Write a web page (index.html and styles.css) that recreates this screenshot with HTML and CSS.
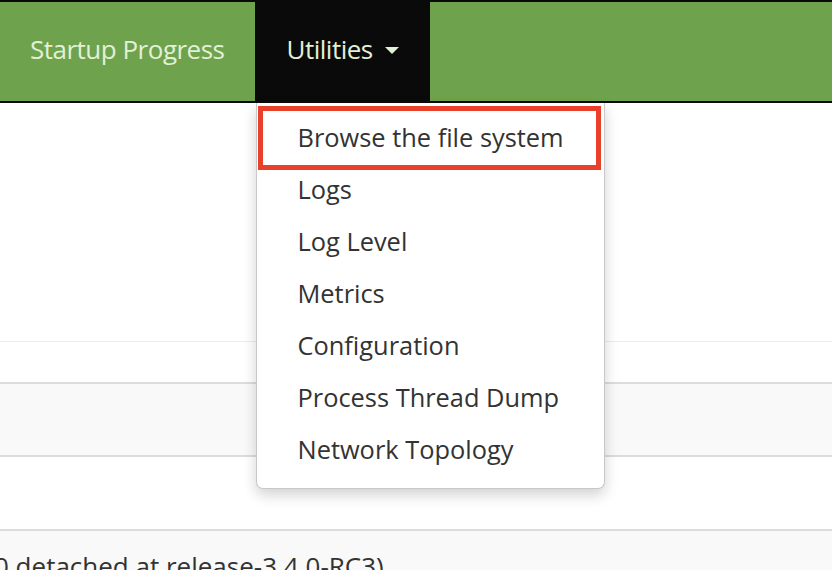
FILE: index.html
```html
<!DOCTYPE html>
<html>
<head>
<meta charset="utf-8">
<link rel="stylesheet" href="styles.css">
</head>
<body>
<div class="navbar">
  <div class="nav-item">Startup Progress</div>
  <div class="nav-item active">Utilities <span class="caret"></span>
    <ul class="dropdown">
      <li class="highlight">Browse the file system</li>
      <li>Logs</li>
      <li>Log Level</li>
      <li>Metrics</li>
      <li>Configuration</li>
      <li>Process Thread Dump</li>
      <li>Network Topology</li>
    </ul>
  </div>
</div>
<div class="content">
  <div class="blank"></div>
  <div class="row r1"></div>
  <div class="row r2"></div>
  <div class="row r3"></div>
  <div class="row r4"><span class="version">0 detached at release-3.4.0-RC3)</span></div>
</div>
</body>
</html>
```
FILE: styles.css
```css
html, body {
  margin: 0;
  padding: 0;
  background: #fff;
  overflow: hidden;
  height: 570px;
}
body {
  font-family: "Open Sans", "Noto Sans", sans-serif;
  color: #333;
}
.navbar {
  display: flex;
  height: 99px;
  background: #6fa24d;
  border-top: 2px solid #0a0a0a;
  border-bottom: 2px solid #0a0a0a;
}
.nav-item {
  position: relative;
  display: flex;
  align-items: center;
  padding: 0 30px 5px;
  font-size: 26px;
  letter-spacing: -0.5px;
  color: #e2f0d6;
  white-space: nowrap;
}
.nav-item.active {
  background: #0a0a0a;
  padding: 0 31px 5px 32px;
}
.caret {
  display: inline-block;
  width: 0;
  height: 0;
  margin-left: 12px;
  margin-top: 3px;
  border-left: 7px solid transparent;
  border-right: 7px solid transparent;
  border-top: 7px solid #e2f0d6;
}
.dropdown {
  position: absolute;
  top: 101px;
  left: 1px;
  width: 347px;
  margin: 0;
  padding: 9px 0 12px;
  list-style: none;
  background: #fff;
  border: 1px solid #c8c8c8;
  border-top: none;
  border-radius: 0 0 7px 7px;
  box-shadow: 0 6px 14px rgba(0,0,0,0.18);
  z-index: 10;
}
.dropdown li {
  position: relative;
  height: 52px;
  line-height: 51px;
  padding-left: 41px;
  font-size: 25.4px;
  letter-spacing: 0;
  color: #333;
  white-space: nowrap;
}
.dropdown li.highlight::after {
  content: "";
  position: absolute;
  left: 1px;
  right: 3px;
  top: -6px;
  bottom: -6px;
  border: 5px solid #e8402a;
}
.content {
  display: flex;
  flex-direction: column;
}
.blank {
  height: 238px;
  border-bottom: 1px solid #ececec;
}
.row {
  border-bottom: 2px solid #dcdcdc;
}
.r1 { height: 40px; background: #fff; }
.r2 { height: 71px; background: #f9f9f9; }
.r3 { height: 72px; background: #fff; }
.r4 {
  height: 40px;
  background: #f9f9f9;
  border-bottom: none;
  padding-top: 17px;
  font-size: 26px;
  line-height: 36px;
  white-space: nowrap;
  text-indent: -6px;
}
```
